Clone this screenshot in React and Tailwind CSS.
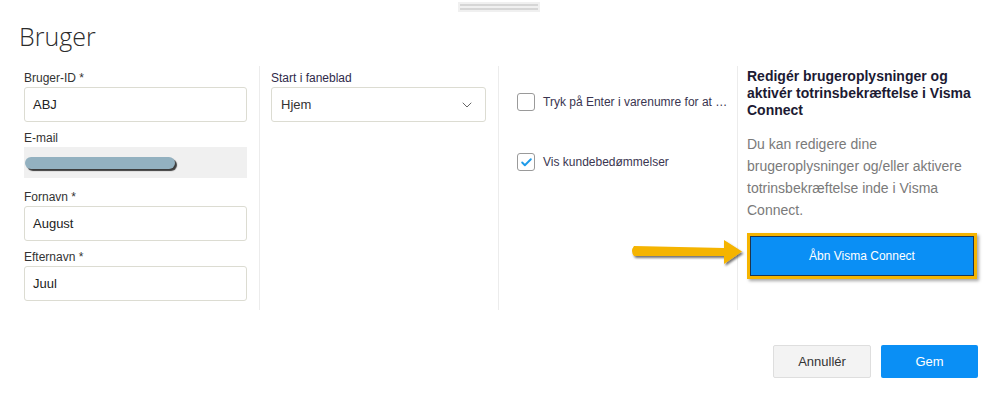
import { ChevronDown, Check } from 'lucide-react';

function Field({ label, value, className = '' }) {
  return (
    <div className={className}>
      <div className="h-[16px] text-[12px] leading-[16px] text-[#333]">{label}</div>
      <div className="mt-[1px] flex h-[35px] items-center rounded-[3px] border border-[#dcdcd2] px-[8px] text-[13px] text-[#222]">
        {value}
      </div>
    </div>
  );
}

function Checkbox({ checked, label }) {
  return (
    <div className="flex items-center gap-[8px]">
      <div className="flex h-[18px] w-[18px] items-center justify-center rounded-[3px] border border-[#9a9a9a] bg-white">
        {checked && <Check className="h-[13px] w-[13px] text-[#1e9be9]" strokeWidth={3.5} />}
      </div>
      <span className="text-[12px] text-[#3a3550]">{label}</span>
    </div>
  );
}

export default function App() {
  return (
    <div className="relative h-[397px] w-[998px] bg-white font-['Liberation_Sans',Arial,sans-serif]">
      {/* drag handle */}
      <div className="flex justify-center pt-[2px]">
        <div className="flex h-[10px] w-[82px] flex-col justify-center gap-[2px] bg-[#f0f0f0] px-[2px]">
          <div className="h-[2px] bg-[#d6d6d6]" />
          <div className="h-[2px] bg-[#d6d6d6]" />
        </div>
      </div>

      <h1 className="ml-[19px] mt-[8px] font-['Open_Sans',sans-serif] text-[25px] font-light leading-[32px] text-[#2b2b2b]">
        Bruger
      </h1>

      <div className="mt-[14px] flex">
        {/* column 1 */}
        <div className="w-[260px] border-r border-[#ececec] pb-[9px] pl-[24px] pr-[12px] pt-[4px]">
          <Field label="Bruger-ID *" value="ABJ" />
          <div className="mt-[8px]">
            <div className="h-[16px] text-[12px] leading-[16px] text-[#333]">E-mail</div>
            <div className="mt-[1px] flex h-[31px] items-center bg-[#f0f0f0] pl-[1px]">
              <div className="h-[12px] w-[150px] rounded-full bg-[#93b1c0] shadow-[2px_2px_1px_#3d3d3d]" />
            </div>
          </div>
          <Field label="Fornavn *" value="August" className="mt-[11px]" />
          <Field label="Efternavn *" value="Juul" className="mt-[8px]" />
        </div>

        {/* column 2 */}
        <div className="w-[239px] border-r border-[#ececec] pl-[11px] pr-[12px] pt-[4px]">
          <div className="h-[16px] text-[12px] leading-[16px] text-[#2f2a4a]">Start i faneblad</div>
          <div className="mt-[1px] flex h-[35px] items-center justify-between rounded-[3px] border border-[#dcdcd2] pl-[9px] pr-[10px] text-[13px] text-[#333]">
            <span>Hjem</span>
            <ChevronDown className="h-[16px] w-[16px] text-[#666]" strokeWidth={1.5} />
          </div>
        </div>

        {/* column 3 */}
        <div className="w-[239px] border-r border-[#ececec] pl-[18px] pt-[27px]">
          <Checkbox label="Tryk på Enter i varenumre for at …" />
          <div className="mt-[42px]">
            <Checkbox checked label="Vis kundebedømmelser" />
          </div>
        </div>

        {/* column 4 */}
        <div className="w-[240px] pl-[9px] pt-[2px]">
          <h2 className="text-[14px] font-bold leading-[17px] text-[#1c1a33]">
            Redigér brugeroplysninger og aktivér totrinsbekræftelse i Visma Connect
          </h2>
          <p className="mt-[14px] text-[14px] leading-[22px] text-[#7a7a7a]">
            Du kan redigere dine brugeroplysninger og/eller aktivere totrinsbekræftelse inde i Visma Connect.
          </p>
          <button className="mt-[12px] flex h-[46px] w-[230px] items-center justify-center border-[3px] border-[#f5b400] bg-[#0a8ff5] text-[12px] text-white shadow-[inset_0_0_0_1px_#1d3550,2px_2px_3px_rgba(0,0,0,0.35)]">
            Åbn Visma Connect
          </button>
        </div>
      </div>

      {/* annotation arrow */}
      <svg className="absolute left-[630px] top-[236px]" width="116" height="34" viewBox="0 0 116 34">
        <defs>
          <filter id="sh" x="-10%" y="-30%" width="130%" height="180%">
            <feDropShadow dx="1.5" dy="2" stdDeviation="1" floodColor="#000" floodOpacity="0.55" />
          </filter>
        </defs>
        <g filter="url(#sh)" fill="#f5b400">
          <path d="M4 10 L94 12 L94 4 L112 15.5 L94 28 L94 20 L4 20 Q0 15 4 10 Z" />
        </g>
      </svg>

      {/* footer */}
      <div className="absolute bottom-[19px] right-[20px] flex gap-[10px]">
        <button className="h-[33px] w-[98px] rounded-[2px] border border-[#dedede] bg-[#f3f3f3] text-[13px] text-[#333]">
          Annullér
        </button>
        <button className="h-[33px] w-[97px] rounded-[2px] bg-[#0a8ff5] text-[13px] text-white">Gem</button>
      </div>
    </div>
  );
}
